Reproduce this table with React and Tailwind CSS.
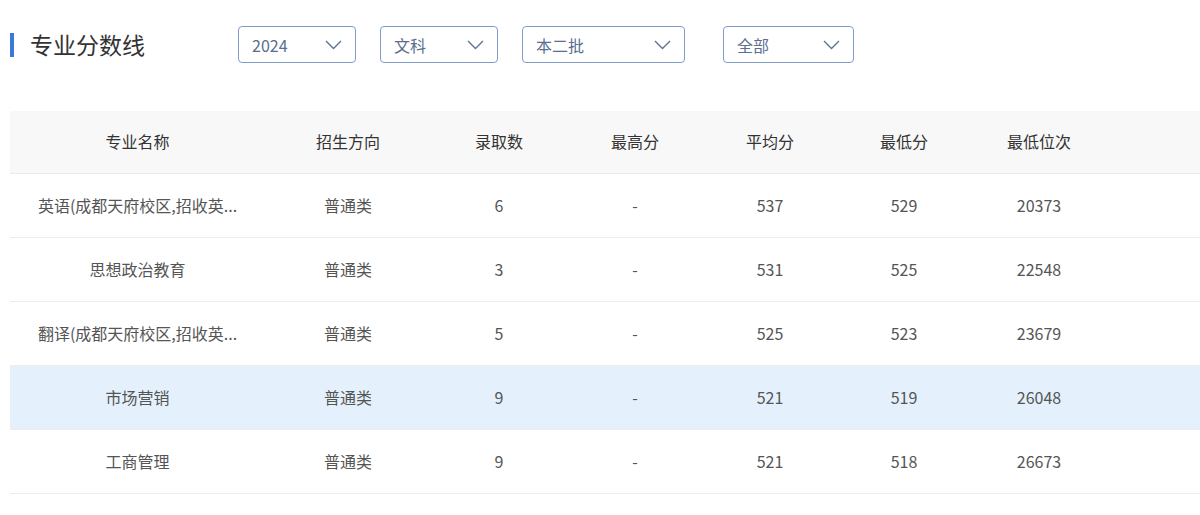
const filters = [
  { label: '2024', w: 'w-[118px]', gap: 'ml-0' },
  { label: '文科', w: 'w-[118px]', gap: 'ml-[24px]' },
  { label: '本二批', w: 'w-[163px]', gap: 'ml-[24px]' },
  { label: '全部', w: 'w-[131px]', gap: 'ml-[38px]' },
];

const cols = [
  { key: 'name', title: '专业名称', w: 'w-[255px]' },
  { key: 'dir', title: '招生方向', w: 'w-[166px]' },
  { key: 'num', title: '录取数', w: 'w-[136px]' },
  { key: 'max', title: '最高分', w: 'w-[136px]' },
  { key: 'avg', title: '平均分', w: 'w-[134px]' },
  { key: 'min', title: '最低分', w: 'w-[134px]' },
  { key: 'rank', title: '最低位次', w: 'w-[136px]' },
];

const rows = [
  { name: '英语(成都天府校区,招收英...', dir: '普通类', num: '6', max: '-', avg: '537', min: '529', rank: '20373' },
  { name: '思想政治教育', dir: '普通类', num: '3', max: '-', avg: '531', min: '525', rank: '22548' },
  { name: '翻译(成都天府校区,招收英...', dir: '普通类', num: '5', max: '-', avg: '525', min: '523', rank: '23679' },
  { name: '市场营销', dir: '普通类', num: '9', max: '-', avg: '521', min: '519', rank: '26048', active: true },
  { name: '工商管理', dir: '普通类', num: '9', max: '-', avg: '521', min: '518', rank: '26673' },
  { name: '国际经济与贸易', dir: '普通类', num: '4', max: '-', avg: '520', min: '517', rank: '27316' },
];

function Chevron() {
  return (
    <svg width="17" height="10" viewBox="0 0 17 10" fill="none" className="shrink-0">
      <path d="M1 1L8.5 8.5L16 1" stroke="#5d7396" strokeWidth="1.4" />
    </svg>
  );
}

export default function App() {
  return (
    <div
      className="h-[515px] w-[1200px] overflow-hidden bg-white"
      style={{ fontFamily: '"Noto Sans CJK SC", "Microsoft YaHei", sans-serif' }}
    >
      <div className="flex items-center pt-[26px] pl-[10px]">
        <div className="h-[24px] w-[4px] bg-[#3a78dc]" />
        <h1 className="ml-[16px] text-[23px] leading-none text-[#333]">专业分数线</h1>
        <div className="ml-[93px] flex">
          {filters.map((f) => (
            <div
              key={f.label}
              className={`${f.w} ${f.gap} flex h-[37px] items-center justify-between rounded-[4px] border border-[#7f9dc8] pl-[13px] pr-[13px] text-[16px] text-[#5a6e8f]`}
            >
              <span>{f.label}</span>
              <Chevron />
            </div>
          ))}
        </div>
      </div>

      <div className="ml-[10px] mt-[48px] w-[1190px] text-[16px]">
        <div className="flex h-[63px] items-center border-b border-[#ececec] bg-[#f8f8f8] pb-[2px] text-[#333]">
          {cols.map((c) => (
            <div key={c.key} className={`${c.w} shrink-0 text-center`}>
              {c.title}
            </div>
          ))}
        </div>
        {rows.map((r, i) => (
          <div
            key={i}
            className={`flex h-[64px] items-center border-b border-[#ececec] pb-[2px] text-[#555] ${r.active ? 'bg-[#e4f1fc]' : 'bg-white'}`}
          >
            {cols.map((c) => (
              <div key={c.key} className={`${c.w} shrink-0 text-center`}>
                {r[c.key]}
              </div>
            ))}
          </div>
        ))}
      </div>
    </div>
  );
}
